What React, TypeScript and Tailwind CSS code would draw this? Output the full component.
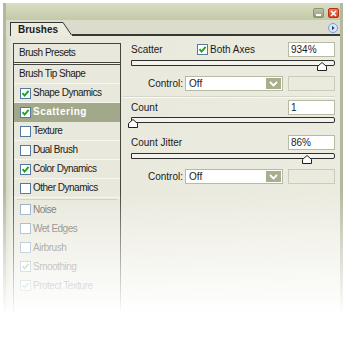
import React from "react"

function Check({ checked, dim }: { checked?: boolean; dim?: boolean }) {
  return (
    <span
      className={`w-[11px] h-[11px] shrink-0 border bg-white flex items-center justify-center ${
        dim ? "border-[#94aac1]" : "border-[#54799f]"
      }`}
    >
      {checked && (
        <svg width="9" height="9" viewBox="0 0 9 9">
          <path d="M1.5 4.2 L3.6 6.6 L7.6 1.8" stroke={dim ? "#8fc98f" : "#1fa31f"} strokeWidth="1.9" fill="none" />
        </svg>
      )}
    </span>
  )
}

function Slider({ at }: { at: number }) {
  return (
    <div className="relative h-[6px] w-full border border-[#2e2e2a] rounded-r-[2px] bg-[#f3f2ec]">
      <svg className="absolute top-[1px]" style={{ left: at - 5 }} width="10" height="9" viewBox="0 0 10 9">
        <polygon points="0.5,8.5 0.5,4.5 5,0.5 9.5,4.5 9.5,8.5" fill="#ffffff" stroke="#1e1e1e" strokeWidth="1" />
      </svg>
    </div>
  )
}

function Control() {
  return (
    <div className="h-[15px] flex items-center">
      <span className="w-[54px] pr-[2px] text-right">Control:</span>
      <div className="w-[98px] h-[15px] bg-white border border-[#b7bba4] flex items-center pl-[3px]">
        <span className="flex-1">Off</span>
        <span className="w-[15px] h-[11px] mr-[1px] bg-[#a7af8c] flex items-center justify-center">
          <svg width="9" height="6" viewBox="0 0 9 6">
            <path d="M1 1 L4.5 4.5 L8 1" stroke="#ffffff" strokeWidth="1.8" fill="none" />
          </svg>
        </span>
      </div>
      <div className="ml-auto w-[47px] h-[15px] border border-[#c9ccb8] bg-[#ebeadf]" />
    </div>
  )
}

function NumBox({ value }: { value: string }) {
  return (
    <div className="ml-auto w-[47px] h-[15px] bg-white border border-[#b7bba4] flex items-center pl-[2px] text-[#222]">
      {value}
    </div>
  )
}

const rows = [
  { label: "Shape Dynamics", checked: true },
  { label: "Scattering", checked: true, active: true },
  { label: "Texture" },
  { label: "Dual Brush" },
  { label: "Color Dynamics", checked: true },
  { label: "Other Dynamics" },
]

const dimRows = [
  { label: "Noise" },
  { label: "Wet Edges" },
  { label: "Airbrush" },
  { label: "Smoothing", checked: true },
  { label: "Protect Texture", checked: true },
]

export default function App() {
  return (
    <div className="w-[347px] h-[363px] bg-white relative overflow-hidden font-['Liberation_Sans',Arial,sans-serif] text-[10px] text-[#1b1b1b] leading-none">
      <div className="ml-[3px] mt-[3px] w-[340px] h-[312px] flex flex-col border-l-[3px] border-r-[3px] border-[#b3b99f] bg-[#ecebe0]">
        {/* title bar */}
        <div className="h-[17px] shrink-0 flex items-start justify-end gap-[4px] pt-[5px] pr-[1px] bg-linear-to-b from-[#d9dec4] to-[#c3caa7]">
          <div className="w-[11px] h-[10px] rounded-[2px] border border-[#8a9373] bg-linear-to-b from-[#bcc4a6] to-[#939c7b] flex items-end pl-[2px] pb-[1px]">
            <span className="w-[5px] h-[2px] bg-white" />
          </div>
          <div className="w-[11px] h-[10px] rounded-[2px] border border-[#b0331c] bg-linear-to-b from-[#ef7a5c] to-[#d63d20] flex items-center justify-center">
            <svg width="7" height="7" viewBox="0 0 7 7">
              <path d="M1 1 L6 6 M6 1 L1 6" stroke="#ffffff" strokeWidth="1.6" />
            </svg>
          </div>
        </div>
        {/* tab strip */}
        <div className="h-[16px] shrink-0 flex items-end bg-[#dcdccc] pl-[4px]">
          <div className="h-[14px] flex items-center pl-[7px] pr-[4px] bg-[#ecebe0] border-t border-l border-[#363632] font-bold">
            Brushes
          </div>
          <svg width="10" height="14" viewBox="0 0 10 14" className="shrink-0">
            <polygon points="0,0.5 1,0.5 10,14 0,14" fill="#ecebe0" />
            <path d="M0 0.5 L1 0.5 L9.5 13" stroke="#363632" strokeWidth="1" fill="none" />
          </svg>
          <div className="flex-1 h-full flex items-start justify-end border-b-2 border-[#363632] pr-[2px] pt-[3px]">
            <svg width="10" height="10" viewBox="0 0 10 10">
              <circle cx="5" cy="5" r="4.5" fill="#dbe6f6" stroke="#7e9cc6" />
              <polygon points="4,2.8 6.6,5 4,7.2" fill="#1d4690" />
            </svg>
          </div>
        </div>
        {/* body */}
        <div className="flex flex-1 bg-linear-to-r from-[#d3d7c2] via-[#e9e8dc] via-[6px] to-[#ecebe0]">
          {/* list */}
          <div className="ml-[7px] mt-[7px] w-[108px] border-l border-r border-t border-[#45453f] bg-[#e9e8dc] flex flex-col tracking-[-0.5px]">
            <div className="h-[19px] flex items-center pl-[5px] border-b border-[#45453f]">Brush Presets</div>
            <div className="h-[2px] border-b border-[#45453f] bg-[#f4f3eb]" />
            <div className="h-[19px] flex items-center pl-[5px] border-b border-[#f8f7ef]">Brush Tip Shape</div>
            {rows.map((r) => (
              <div
                key={r.label}
                className={`h-[19px] flex items-center gap-[2px] pl-[6px] border-b ${
                  r.active ? "bg-[#a2a98a] border-[#a2a98a] text-white font-bold tracking-[0.5px]" : "border-[#f8f7ef]"
                }`}
              >
                <Check checked={r.checked} />
                <span>{r.label}</span>
              </div>
            ))}
            <div className="h-[2px] mx-[3px] border-b border-[#d0cfc3]" />
            {dimRows.map((r) => (
              <div key={r.label} className="h-[19px] flex items-center gap-[2px] pl-[6px] text-[#6e6e67]">
                <Check checked={r.checked} dim />
                <span>{r.label}</span>
              </div>
            ))}
          </div>
          {/* options */}
          <div className="flex-1 flex flex-col pl-[10px] pr-[5px] pt-[6px]">
            <div className="h-[15px] flex items-center">
              <span className="w-[66px]">Scatter</span>
              <Check checked />
              <span className="ml-[2px]">Both Axes</span>
              <NumBox value="934%" />
            </div>
            <div className="mt-[3px]">
              <Slider at={190} />
            </div>
            <div className="mt-[10px]">
              <Control />
            </div>
            <div className="mt-[5px] -ml-[8px] h-[2px] border-t border-[#d6d5c9] border-b border-b-[#fbfaf4]" />
            <div className="mt-[2px] h-[15px] flex items-center">
              <span>Count</span>
              <NumBox value="1" />
            </div>
            <div className="mt-[2px]">
              <Slider at={1} />
            </div>
            <div className="mt-[12px] h-[15px] flex items-center">
              <span>Count Jitter</span>
              <NumBox value="86%" />
            </div>
            <div className="mt-[3px]">
              <Slider at={175} />
            </div>
            <div className="mt-[10px]">
              <Control />
            </div>
          </div>
        </div>
      </div>
      {/* fade to white over the bottom */}
      <div className="absolute left-0 top-[190px] w-full h-[125px] bg-linear-to-b from-white/0 to-white" />
      <div className="absolute left-0 top-[315px] w-full h-[48px] bg-white" />
    </div>
  )
}
